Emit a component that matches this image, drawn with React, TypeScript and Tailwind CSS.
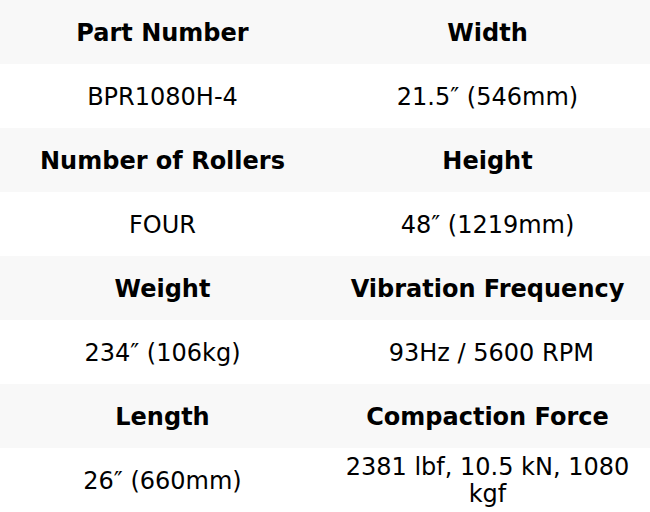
import React from "react";

const rows: [string, string][][] = [
  [["Part Number", "Width"], ["BPR1080H-4", "21.5″ (546mm)"]],
  [["Number of Rollers", "Height"], ["FOUR", "48″ (1219mm)"]],
  [["Weight", "Vibration Frequency"], ["234″ (106kg)", "\u00a093Hz / 5600 RPM"]],
  [["Length", "Compaction Force"], ["26″ (660mm)", "2381 lbf, 10.5 kN, 1080 kgf"]],
];

export default function App() {
  return (
    <div
      className="w-[650px] h-[512px] overflow-hidden bg-white text-black"
      style={{ fontFamily: '"DejaVu Sans", sans-serif' }}
    >
      <table className="w-full border-collapse table-fixed text-[24px] leading-[27px]">
        <tbody>
          {rows.map((pair, i) => (
            <React.Fragment key={i}>
              <tr className="bg-[#f8f8f8] h-16">
                <td className="text-center font-bold px-3 pt-[2px] align-middle">{pair[0][0]}</td>
                <td className="text-center font-bold px-3 pt-[2px] align-middle">{pair[0][1]}</td>
              </tr>
              <tr className="bg-white h-16">
                <td className="text-center px-3 pt-[2px] align-middle">{pair[1][0]}</td>
                <td className="text-center px-3 pt-[2px] align-middle">{pair[1][1]}</td>
              </tr>
            </React.Fragment>
          ))}
        </tbody>
      </table>
    </div>
  );
}
